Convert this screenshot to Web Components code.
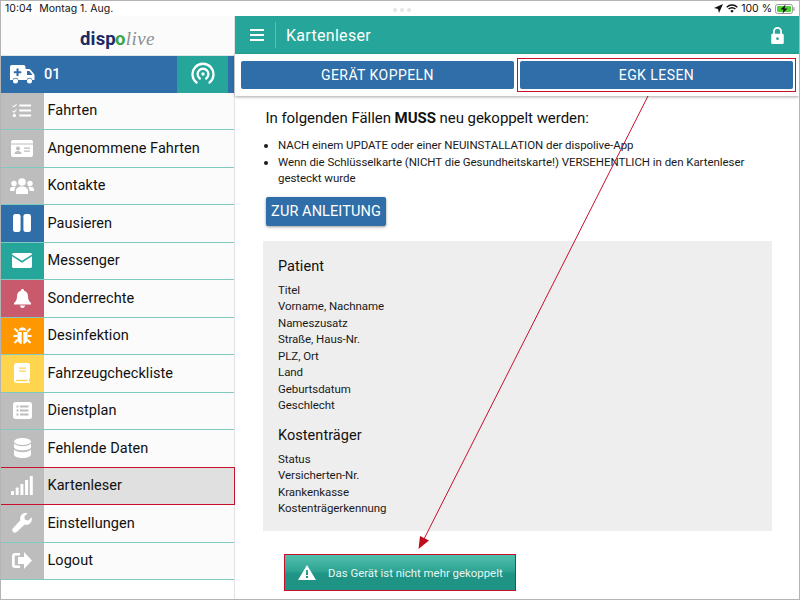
<!DOCTYPE html>
<html lang="de">
<head>
<meta charset="utf-8">
<title>Kartenleser</title>
<style>
    html, body { margin: 0; height: 100%; background: #fff; }
    body { font-family: Roboto, "Liberation Sans", sans-serif; overflow: hidden; }
    svg.ico { display: block; fill: #fff; }
</style>
</head>
<body>

<app-shell>
    <status-bar></status-bar>
    <side-menu slot="side">
        <menu-item><svg slot="icon" class="ico" width="20" height="15" viewBox="0 0 22 16"><path d="M1 2l1.200 1.200L4.600.6l.8.7-3.200 3.400L.3 2.800zM1 8l1.200 1.200 2.400-2.600.8.7-3.200 3.400L.3 8.800zM8 1.500h13v2.200H8zM8 7h13v2.200H8zM8 12.500h13v2.200H8z"/><circle cx="2.600" cy="13.500" r="1.800"/></svg>Fahrten</menu-item>
        <menu-item><svg slot="icon" class="ico" width="22" height="17" viewBox="0 0 22 17"><path fill-rule="evenodd" d="M2 0h18a2 2 0 0 1 2 2v13a2 2 0 0 1-2 2H2a2 2 0 0 1-2-2V2a2 2 0 0 1 2-2zM0 3.500v1h22v-1zM13 7.500v1.300h6V7.500zM13 10.500v1.300h6v-1.300zM7 6.500a2 2 0 1 0 0 4 2 2 0 0 0 0-4zM3.500 14h7c0-2-1.500-3-3.500-3s-3.500 1-3.500 3z"/></svg>Angenommene Fahrten</menu-item>
        <menu-item><svg slot="icon" class="ico" width="24" height="16" viewBox="0 0 24 16"><circle cx="12" cy="4" r="3.800"/><circle cx="4" cy="5.500" r="2.700"/><circle cx="20" cy="5.500" r="2.700"/><path d="M6 16v-3c0-3 2.500-4.500 6-4.500s6 1.500 6 4.500v3zM0 13v-1.500C0 9.500 1.500 8.800 4 8.800c.8 0 1.300.1 1.800.3C4.800 10 4.500 11.500 4.500 13zM24 13v-1.500c0-2-1.500-2.700-4-2.700-.8 0-1.300.1-1.800.3 1 .9 1.300 2.400 1.300 3.900z"/></svg>Kontakte</menu-item>
        <menu-item tone="#2f6ea8"><svg slot="icon" class="ico" width="18" height="18" viewBox="0 0 19 19"><rect x="0" y="0" width="8" height="19" rx="2.500"/><rect x="11" y="0" width="8" height="19" rx="2.500"/></svg>Pausieren</menu-item>
        <menu-item tone="#26a69a"><svg slot="icon" class="ico" width="20" height="15" viewBox="0 0 20 15"><path d="M1.500 0h17c.8 0 1.500.6 1.500 1.400L10 7.800 0 1.400C0 .6.700 0 1.500 0zM0 3.300l10 6.400 10-6.400v10.200c0 .8-.7 1.500-1.500 1.500h-17C.7 15 0 14.300 0 13.500z"/></svg>Messenger</menu-item>
        <menu-item tone="#c9596d"><svg slot="icon" class="ico" width="17" height="19" viewBox="0 0 17 19"><path d="M8.500 0c1 0 1.600.7 1.600 1.700 2.700.7 3.900 3 3.900 5.800 0 3 1 4.800 3 6.500v1.500H0V14c2-1.700 3-3.500 3-6.500 0-2.800 1.200-5.100 3.900-5.800C6.900.7 7.500 0 8.500 0zM6 16.500h5c0 1.400-1.100 2.500-2.500 2.500S6 17.900 6 16.500z"/></svg>Sonderrechte</menu-item>
        <menu-item tone="#ff9800"><svg slot="icon" class="ico" width="19" height="19" viewBox="0 0 19 19"><path d="M5.500 4.500C6 2.500 7.500 1.200 9.500 1.200s3.500 1.300 4 3.300zM4.500 6h4.200v12C6 17.500 4.500 15.700 4.500 13zM10.300 6h4.200v7c0 2.700-1.500 4.500-4.200 5z"/><path d="M1.500 2.500l3.300 3.300M17.500 2.500l-3.300 3.300M.5 10h4M18.500 10h-4M1.500 17l3.300-3.300M17.500 17l-3.300-3.300" stroke="#fff" stroke-width="2" fill="none"/></svg>Desinfektion</menu-item>
        <menu-item tone="#ffd54f"><svg slot="icon" class="ico" width="16" height="20" viewBox="0 0 16 20"><path fill-rule="evenodd" d="M3 0h11a2 2 0 0 1 2 2v13c0 .8-.4 1.300-1 1.600v1.900h1V20H3a3 3 0 0 1-3-3V3a3 3 0 0 1 3-3zM5 4.500v1.200h7V4.500zM5 7.500v1.200h7V7.500zM3 16.800c-.7 0-1 .3-1 .7s.3.800 1 .8h10.500v-1.500z"/></svg>Fahrzeugcheckliste</menu-item>
        <menu-item><svg slot="icon" class="ico" width="19" height="17" viewBox="0 0 19 17"><path fill-rule="evenodd" d="M2.500 0h14A2.500 2.500 0 0 1 19 2.500v12a2.500 2.500 0 0 1-2.500 2.500h-14A2.500 2.500 0 0 1 0 14.500v-12A2.500 2.500 0 0 1 2.500 0zM3.500 3.500v2h2v-2zM7 3.500v2h8.500v-2zM3.500 7.500v2h2v-2zM7 7.500v2h8.500v-2zM3.500 11.500v2h2v-2zM7 11.500v2h8.500v-2z"/></svg>Dienstplan</menu-item>
        <menu-item><svg slot="icon" class="ico" width="17" height="20" viewBox="0 0 17 20"><ellipse cx="8.500" cy="3.500" rx="8.500" ry="3.500"/><path d="M0 5.500c1.500 2 5 2.700 8.500 2.700S15.500 7.500 17 5.500V9c0 2-3.800 3.300-8.500 3.300S0 11 0 9zM0 11.500c1.500 2 5 2.700 8.500 2.700s7-.7 8.500-2.700v5c0 2-3.800 3.500-8.500 3.500S0 18.500 0 16.500z"/></svg>Fehlende Daten</menu-item>
        <menu-item active><svg slot="icon" class="ico" width="22" height="19" viewBox="0 0 22 19"><rect x="0" y="15" width="3" height="4" rx=".5"/><rect x="4.700" y="11.500" width="3" height="7.500" rx=".5"/><rect x="9.400" y="8" width="3" height="11" rx=".5"/><rect x="14.100" y="4" width="3" height="15" rx=".5"/><rect x="18.800" y="0" width="3" height="19" rx=".5"/></svg>Kartenleser</menu-item>
        <menu-item><svg slot="icon" class="ico" width="20" height="20" viewBox="0 0 20 20"><path d="M19.600 4.200l-3.300 3.300-3.300-.7-.7-3.300L15.600.2c-2.500-.7-5 0-6.300 1.800-1.200 1.500-1.500 3.500-.9 5.300L.9 15.200a2.700 2.700 0 0 0 3.800 3.800l7.900-7.500c1.800.6 3.900.2 5.300-1.100 1.700-1.600 2.300-4 1.700-6.200z"/></svg>Einstellungen</menu-item>
        <menu-item><svg slot="icon" class="ico" width="20" height="17" viewBox="0 0 20 17"><path d="M3 1h5v2.500H4c-.8 0-1.300.5-1.300 1.300v7.400c0 .8.500 1.300 1.300 1.300h4V16H3c-1.700 0-3-1.300-3-3V4c0-1.700 1.300-3 3-3z"/><path d="M12 0l8 8.500-8 8.500v-5H6V5h6z"/></svg>Logout</menu-item>
    </side-menu>

    <top-header slot="main" title="Kartenleser"></top-header>
    <tab-bar slot="main">
        <app-button>GERÄT KOPPELN</app-button>
        <app-button marked>EGK LESEN</app-button>
    </tab-bar>
    <reader-page slot="main"></reader-page>
</app-shell>

<script>
// status bar on top of the device frame
class StatusBar extends HTMLElement {
    constructor() {
        super();
        this.attachShadow({ mode: 'open' });
        this.shadowRoot.innerHTML = `
            <style>
                :host {
                    display: flex;
                    align-items: center;
                    justify-content: space-between;
                    height: 15px;
                    padding: 0 4px;
                    position: relative;
                    font: 10.500px Inter, "Liberation Sans", sans-serif;
                    color: #111;
                    background: #fff;
                }
                .left span { margin-right: 7px; }
                .right { display: flex; align-items: center; gap: 3px; }
                .dots { position: absolute; left: 392px; top: 7px; display: flex; gap: 3px; }
                .dots i { width: 4px; height: 4px; border-radius: 50%; background: #e6e6e6; }
            </style>
            <div class="left"><span>10:04</span><span>Montag 1. Aug.</span></div>
            <div class="dots"><i></i><i></i><i></i></div>
            <div class="right">
                <svg width="9" height="9" viewBox="0 0 9 9"><path d="M9 0L5 9 4 5 0 4z" fill="#111"/></svg>
                <svg width="12" height="9" viewBox="0 0 12 9" fill="none" stroke="#111" stroke-width="1.400"><path d="M.7 3.200a7.500 7.500 0 0 1 10.600 0M2.600 5.100a4.800 4.800 0 0 1 6.800 0"/><path d="M4.300 6.900a2.400 2.400 0 0 1 3.400 0L6 8.700z" fill="#111" stroke="none"/></svg>
                <span>100 %</span>
                <svg width="20" height="10" viewBox="0 0 20 10"><rect x=".5" y=".5" width="17" height="9" rx="2" fill="none" stroke="#9a9a9a"/><rect x="2" y="2" width="14" height="6" rx="1" fill="#4cd137"/><rect x="18.300" y="3.200" width="1.200" height="3.600" fill="#9a9a9a"/><path d="M10.500 .5L5.500 5.500h3L7.500 9.500l5-5h-3z" fill="#111"/></svg>
            </div>
        `;
    }
}
customElements.define('status-bar', StatusBar);

// two column frame, sidebar and content
class AppShell extends HTMLElement {
    constructor() {
        super();
        this.attachShadow({ mode: 'open' });
        this.shadowRoot.innerHTML = `
            <style>
                :host {
                    display: flex;
                    flex-direction: column;
                    position: relative;
                    box-sizing: border-box;
                    width: 800px;
                    height: 600px;
                    border: 1px solid #b4b4b4;
                    overflow: hidden;
                }
                .body { display: flex; flex: 1; min-height: 0; }
                .side { width: 233px; flex: none; border-right: 1px solid #e2e2e2; }
                .main { flex: 1; min-width: 0; display: flex; flex-direction: column; }
                svg.arrow { position: absolute; left: 0; top: 0; pointer-events: none; }
            </style>
            <slot></slot>
            <div class="body">
                <div class="side"><slot name="side"></slot></div>
                <div class="main"><slot name="main"></slot></div>
            </div>
            <svg class="arrow" width="798" height="598" viewBox="1 1 798 598">
                <path d="M648 96L424 539" stroke="#c8102e" stroke-width="1" fill="none"/>
                <path d="M418.500 549l1.500-13 9 4.500z" fill="#c00d1e"/>
            </svg>
        `;
    }
}
customElements.define('app-shell', AppShell);

class SideMenu extends HTMLElement {
    constructor() {
        super();
        this.attachShadow({ mode: 'open' });
        this.shadowRoot.innerHTML = `
            <style>
                :host { display: block; background: #fff; }
                .logo {
                    height: 39px;
                    display: flex;
                    align-items: center;
                    justify-content: center;
                    padding: 6px 0 0 0;
                    box-sizing: border-box;
                    background: #fbfbfb;
                    line-height: 1;
                }
                .logo b { font: bold 18.500px Roboto, sans-serif; color: #1b2a63; letter-spacing: .2px; }
                .logo b i { font-style: normal; color: #3aa545; margin-left: -1px; }
                .logo em { font: italic 19px "Liberation Serif", serif; color: #8a8f94; letter-spacing: .5px; }
                .vehicle {
                    display: flex;
                    height: 37.500px;
                    background: #2f6ea8;
                    color: #fff;
                    border-top: 1px solid #dfe6ea;
                    box-sizing: border-box;
                }
                .car {
                    width: 174px;
                    display: flex;
                    align-items: center;
                    gap: 9px;
                    padding-left: 9px;
                    box-sizing: border-box;
                    font: 500 14.500px Roboto, sans-serif;
                }
                .signal {
                    width: 51px;
                    margin-left: 2px;
                    background: #26a69a;
                    display: flex;
                    align-items: center;
                    justify-content: center;
                }
                .rest { margin-left: 2px; flex: 1; }
                .list { display: block; background: #fbfbfb; }
            </style>
            <div class="logo"><b>disp<i>o</i></b><em>live</em></div>
            <div class="vehicle">
                <div class="car">
                    <svg width="25" height="19" viewBox="0 0 25 19"><path fill="#fff" fill-rule="evenodd" d="M2 0h11.500a2 2 0 0 1 2 2v2h3.500c.6 0 1.100.3 1.500.7l3.500 4.300c.3.400.5.800.5 1.300V15h-2.100a3 3 0 0 0-5.800 0H8.400a3 3 0 0 0-5.800 0H0V2a2 2 0 0 1 2-2zM6.500 3.500v2.700H3.800v2.100h2.700V11h2.100V8.300h2.700V6.200H8.600V3.500zM17 6v4h5.500l-3.200-4z"/><circle cx="5.500" cy="16" r="2.500" fill="#fff"/><circle cx="19.500" cy="16" r="2.500" fill="#fff"/></svg>
                    <span>01</span>
                </div>
                <div class="signal">
                    <svg width="24" height="24" viewBox="0 0 24 24" fill="none" stroke="#fff" stroke-width="2.300" stroke-linecap="round"><path d="M5.500 20.500a10.500 10.500 0 1 1 13 0"/><path d="M8.800 16.500a5.400 5.400 0 1 1 6.400 0"/><circle cx="12" cy="12" r="1.700" fill="#fff" stroke="none"/></svg>
                </div>
                <div class="rest"></div>
            </div>
            <div class="list"><slot></slot></div>
        `;
    }
}
customElements.define('side-menu', SideMenu);

class MenuItem extends HTMLElement {
    constructor() {
        super();
        this.attachShadow({ mode: 'open' });
        this.shadowRoot.innerHTML = `
            <style>
                :host {
                    display: grid;
                    grid-template-columns: 42.500px 1fr;
                    position: relative;
                    height: 37.500px;
                    box-sizing: border-box;
                    border-bottom: 1.500px solid #7fc9bf;
                    font: 14.500px Roboto, sans-serif;
                    letter-spacing: .05px;
                    color: #111;
                }
                .icon {
                    display: flex;
                    align-items: center;
                    justify-content: center;
                    background: var(--tone, #bdbdbd);
                }
                .label { display: flex; align-items: center; padding-left: 4px; }
                :host([active]) { border-bottom-color: transparent; }
                :host([active]) .label { background: #e0e0e0; }
                :host([active])::after {
                    content: "";
                    position: absolute;
                    inset: -1px -1px -1px -1px;
                    border: 1px solid #c8102e;
                }
            </style>
            <div class="icon"><slot name="icon"></slot></div>
            <div class="label"><slot></slot></div>
        `;
    }
    connectedCallback() {
        if (this.hasAttribute('tone')) {
            this.style.setProperty('--tone', this.getAttribute('tone'));
        }
    }
}
customElements.define('menu-item', MenuItem);

class TopHeader extends HTMLElement {
    constructor() {
        super();
        this.attachShadow({ mode: 'open' });
        this.shadowRoot.innerHTML = `
            <style>
                :host {
                    display: flex;
                    align-items: center;
                    height: 38px;
                    flex: none;
                    background: #26a69a;
                    color: #fff;
                    font: 16px Roboto, sans-serif;
                    letter-spacing: .3px;
                }
                .menu {
                    width: 14px;
                    height: 8px;
                    margin-left: 15px;
                    border-top: 2px solid #fff;
                    border-bottom: 2px solid #fff;
                    position: relative;
                }
                .menu::after { content: ""; position: absolute; left: 0; right: 0; top: 3px; height: 2px; background: #fff; }
                .sep { width: 1px; height: 26px; background: #5cbdb2; margin: 0 10px 0 11px; }
                .title { flex: 1; }
                svg { margin-right: 15px; }
            </style>
            <div class="menu"></div>
            <div class="sep"></div>
            <div class="title"></div>
            <svg width="13" height="17" viewBox="0 0 14 19"><path fill="#fff" fill-rule="evenodd" d="M7 0a5 5 0 0 1 5 5v2.500h.500c.8 0 1.500.7 1.500 1.500v8.500c0 .8-.7 1.500-1.500 1.500h-11C.7 19 0 18.300 0 17.500V9c0-.8.700-1.500 1.500-1.500H2V5a5 5 0 0 1 5-5zM7 2a3 3 0 0 0-3 3v2.500h6V5a3 3 0 0 0-3-3zM7 11.500a1.500 1.500 0 1 0 0 3 1.500 1.500 0 0 0 0-3z"/></svg>
        `;
        this.shadowRoot.querySelector('.title').textContent = this.getAttribute('title');
    }
}
customElements.define('top-header', TopHeader);

class TabBar extends HTMLElement {
    constructor() {
        super();
        this.attachShadow({ mode: 'open' });
        this.shadowRoot.innerHTML = `
            <style>
                :host {
                    display: grid;
                    grid-template-columns: 1fr 1fr;
                    gap: 6px;
                    flex: none;
                    height: 42px;
                    box-sizing: border-box;
                    padding: 7px 6px 6px 6px;
                    background: #fff;
                    box-shadow: 0 1px 3px rgba(0, 0, 0, .35);
                    position: relative;
                    z-index: 1;
                }
            </style>
            <slot></slot>
        `;
    }
}
customElements.define('tab-bar', TabBar);

class AppButton extends HTMLElement {
    constructor() {
        super();
        this.attachShadow({ mode: 'open' });
        this.shadowRoot.innerHTML = `
            <style>
                :host {
                    display: flex;
                    align-items: center;
                    justify-content: center;
                    position: relative;
                    height: 28px;
                    border-radius: 2px;
                    background: #2f6ea8;
                    color: #fff;
                    font: 14px Roboto, sans-serif;
                    letter-spacing: .45px;
                }
                :host([marked])::after {
                    content: "";
                    position: absolute;
                    inset: -3px;
                    border: 1px solid #c8102e;
                }
                :host([raised]) {
                    box-shadow: 0 1px 3px rgba(0, 0, 0, .4);
                    height: 29px;
                    width: 120px;
                    font-size: 14.500px;
                    letter-spacing: .1px;
                }
            </style>
            <slot></slot>
        `;
    }
}
customElements.define('app-button', AppButton);

class FieldGroup extends HTMLElement {
    constructor() {
        super();
        this.attachShadow({ mode: 'open' });
        this.shadowRoot.innerHTML = `
            <style>
                :host { display: block; font: 11.500px/16.500px Roboto, sans-serif; color: #1a1a1a; letter-spacing: -.06px; }
                h3 { margin: 0 0 5px 0; font: 14.500px/20px Roboto, sans-serif; letter-spacing: .05px; color: #111; }
                ::slotted(div) { display: block; }
            </style>
            <h3></h3>
            <slot></slot>
        `;
        this.shadowRoot.querySelector('h3').textContent = this.getAttribute('heading');
    }
}
customElements.define('field-group', FieldGroup);

class ReaderPage extends HTMLElement {
    constructor() {
        super();
        this.attachShadow({ mode: 'open' });
        this.shadowRoot.innerHTML = `
            <style>
                :host {
                    display: flex;
                    flex-direction: column;
                    flex: 1;
                    position: relative;
                    padding: 13px 27px 0 28px;
                    background: #fff;
                    color: #111;
                    font-family: Roboto, sans-serif;
                }
                .intro { margin: 0 0 0 2.500px; font-size: 15px; line-height: 18px; letter-spacing: -.05px; }
                .intro b { font-weight: 700; }
                ul { margin: 10px 0 10px 0; padding: 0 0 0 15px; font-size: 11.500px; line-height: 16.500px; letter-spacing: -.05px; color: #1a1a1a; }
                .guide { margin-left: 3px; }
                .data {
                    margin-top: 15px;
                    height: 290px;
                    box-sizing: border-box;
                    padding: 16px 15px 15px 15px;
                    background: #eee;
                    display: flex;
                    flex-direction: column;
                    gap: 12px;
                }
                .toast {
                    position: absolute;
                    left: 49px;
                    top: 458px;
                    width: 232px;
                    height: 37px;
                    box-sizing: border-box;
                    display: flex;
                    align-items: center;
                    gap: 12px;
                    padding-left: 13px;
                    color: #e8f6f3;
                    font-size: 11.400px;
                    letter-spacing: 0;
                    border: 1px solid #c8102e;
                    background: linear-gradient(#52bfae 0%, #2fa594 45%, #1f9484 55%, #1f9484 100%);
                }
            </style>
            <p class="intro">In folgenden Fällen <b>MUSS</b> neu gekoppelt werden:</p>
            <ul>
                <li>NACH einem UPDATE oder einer NEUINSTALLATION der dispolive-App</li>
                <li>Wenn die Schlüsselkarte (NICHT die Gesundheitskarte!) VERSEHENTLICH in den Kartenleser gesteckt wurde</li>
            </ul>
            <app-button class="guide" raised>ZUR ANLEITUNG</app-button>
            <div class="data">
                <field-group heading="Patient">
                    <div>Titel</div>
                    <div>Vorname, Nachname</div>
                    <div>Nameszusatz</div>
                    <div>Straße, Haus-Nr.</div>
                    <div>PLZ, Ort</div>
                    <div>Land</div>
                    <div>Geburtsdatum</div>
                    <div>Geschlecht</div>
                </field-group>
                <field-group heading="Kostenträger">
                    <div>Status</div>
                    <div>Versicherten-Nr.</div>
                    <div>Krankenkasse</div>
                    <div>Kostenträgerkennung</div>
                </field-group>
            </div>
            <div class="toast">
                <svg width="18" height="15" viewBox="0 0 18 15"><path fill="#fff" fill-rule="evenodd" d="M9 0l9 15H0zM8 5v5h2V5zM8 11v2h2v-2z"/></svg>
                <span>Das Gerät ist nicht mehr gekoppelt</span>
            </div>
        `;
    }
}
customElements.define('reader-page', ReaderPage);
</script>
</body>
</html>
